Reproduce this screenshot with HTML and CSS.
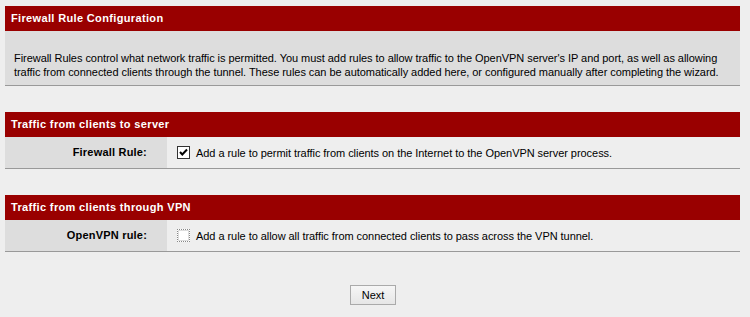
FILE: index.html
```html
<!DOCTYPE html>
<html lang="en">
<head>
    <meta charset="UTF-8">
    <title>OpenVPN Wizard</title>
    <link rel="stylesheet" href="styles.css">
</head>
<body>
    <div class="wizard">
        <div class="section">
            <div class="section-title">Firewall Rule Configuration</div>
            <div class="section-desc">
                Firewall Rules control what network traffic is permitted. You must add rules to allow traffic to the OpenVPN server's IP and port, as well as allowing traffic from connected clients through the tunnel. These rules can be automatically added here, or configured manually after completing the wizard.
            </div>
        </div>

        <div class="section">
            <div class="section-title">Traffic from clients to server</div>
            <div class="row">
                <div class="row-label">Firewall Rule:</div>
                <div class="row-value">
                    <span class="check checked">
                        <svg width="11" height="11" viewBox="0 0 11 11"><path d="M2 5 L4.3 7.5 L9 2.5" fill="none" stroke="#000" stroke-width="2"/></svg>
                    </span>
                    <span>Add a rule to permit traffic from clients on the Internet to the OpenVPN server process.</span>
                </div>
            </div>
        </div>

        <div class="section">
            <div class="section-title">Traffic from clients through VPN</div>
            <div class="row">
                <div class="row-label">OpenVPN rule:</div>
                <div class="row-value">
                    <span class="check focused"></span>
                    <span>Add a rule to allow all traffic from connected clients to pass across the VPN tunnel.</span>
                </div>
            </div>
        </div>

        <div class="actions">
            <button type="button">Next</button>
        </div>
    </div>
</body>
</html>
```

FILE: styles.css
```css
* {
    margin: 0;
    padding: 0;
    box-sizing: border-box;
}

body {
    background-color: #eeeeee;
    font-family: "Liberation Sans", Arial, sans-serif;
    font-size: 11px;
    letter-spacing: -0.05px;
    color: #000000;
    padding: 6px 10px 0 5px;
}

.wizard {
    width: 735px;
}

.section {
    margin-bottom: 26px;
}

.section-title {
    background-color: #990000;
    color: #ffffff;
    font-weight: bold;
    letter-spacing: 0.35px;
    height: 25px;
    line-height: 25px;
    padding-left: 6px;
}

.section-desc {
    background-color: #dddddd;
    border-bottom: 1px solid #999999;
    padding: 20px 6px 6px 9px;
    line-height: 14px;
    height: 55px;
}

.row {
    display: grid;
    grid-template-columns: 162px 1fr;
    border-bottom: 1px solid #999999;
    height: 32px;
}

.row-label {
    background-color: #dddddd;
    font-weight: bold;
    letter-spacing: 0.2px;
    text-align: right;
    padding-right: 20px;
    line-height: 31px;
}

.row-value {
    display: flex;
    align-items: center;
    gap: 6px;
    padding-left: 10px;
}

.check {
    width: 13px;
    height: 13px;
    flex: none;
    background-color: #ffffff;
    border: 1px solid #333333;
    display: flex;
    align-items: center;
    justify-content: center;
}

.check.focused {
    border: 1px dotted #888888;
    box-shadow: inset 0 0 0 1px #dddddd;
}

.actions {
    display: flex;
    justify-content: center;
    padding-top: 7px;
}

button {
    font-family: inherit;
    font-size: 11px;
    width: 46px;
    height: 20px;
    border: 1px solid #aaaaaa;
    background: linear-gradient(#f6f6f6, #e6e6e6);
    color: #000000;
    margin-left: 1px;
}
```
